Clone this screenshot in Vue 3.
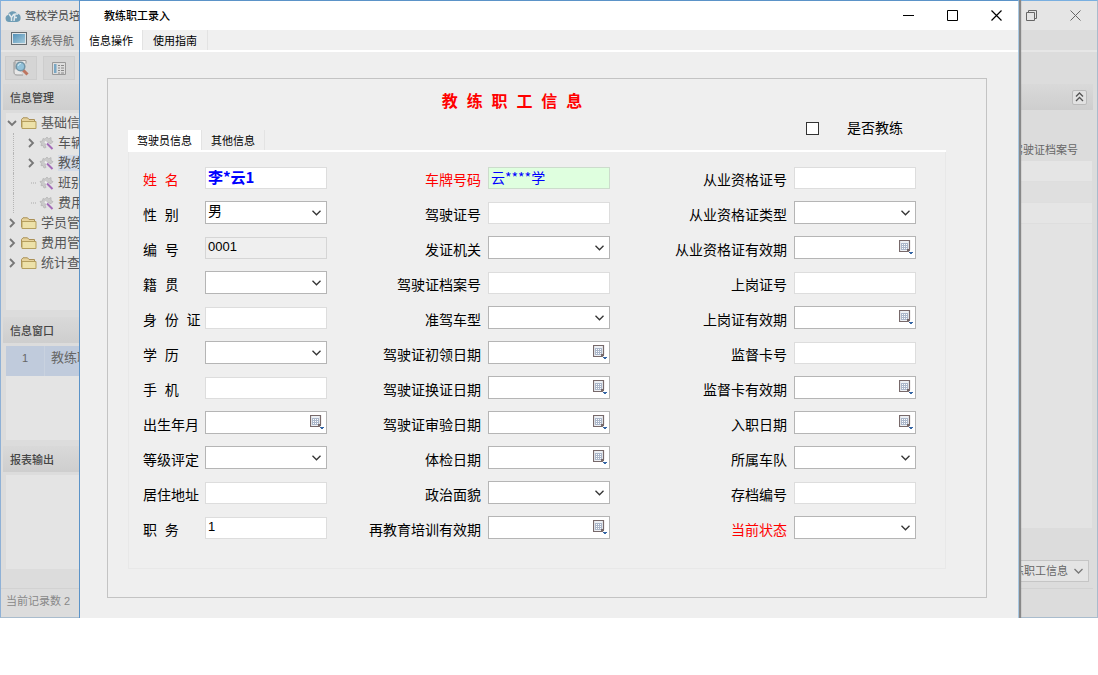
<script setup>
import { ref } from 'vue'

const heading = '教  练  职  工  信  息'

const tree = [
  { text: '基础信', level: 1, open: true },
  { text: '车辆', level: 2, arrow: true },
  { text: '教练', level: 2, arrow: true, active: true },
  { text: '班别', level: 2 },
  { text: '费用', level: 2, last: true },
  { text: '学员管', level: 1 },
  { text: '费用管', level: 1 },
  { text: '统计查', level: 1 },
]

const columns = [
  [
    { label: '姓  名', type: 'text', value: '李*云1', required: true, look: 'strong' },
    { label: '性  别', type: 'select', value: '男' },
    { label: '编  号', type: 'text', value: '0001', look: 'locked' },
    { label: '籍  贯', type: 'select', value: '' },
    { label: '身  份  证', type: 'text', value: '' },
    { label: '学  历', type: 'select', value: '' },
    { label: '手  机', type: 'text', value: '' },
    { label: '出生年月', type: 'date', value: '' },
    { label: '等级评定', type: 'select', value: '' },
    { label: '居住地址', type: 'text', value: '' },
    { label: '职  务', type: 'text', value: '1' },
  ],
  [
    { label: '车牌号码', type: 'text', value: '云****学', required: true, look: 'plate' },
    { label: '驾驶证号', type: 'text', value: '' },
    { label: '发证机关', type: 'select', value: '' },
    { label: '驾驶证档案号', type: 'text', value: '' },
    { label: '准驾车型', type: 'select', value: '' },
    { label: '驾驶证初领日期', type: 'date', value: '' },
    { label: '驾驶证换证日期', type: 'date', value: '' },
    { label: '驾驶证审验日期', type: 'date', value: '' },
    { label: '体检日期', type: 'date', value: '' },
    { label: '政治面貌', type: 'select', value: '' },
    { label: '再教育培训有效期', type: 'date', value: '' },
  ],
  [
    { label: '从业资格证号', type: 'text', value: '' },
    { label: '从业资格证类型', type: 'select', value: '' },
    { label: '从业资格证有效期', type: 'date', value: '' },
    { label: '上岗证号', type: 'text', value: '' },
    { label: '上岗证有效期', type: 'date', value: '' },
    { label: '监督卡号', type: 'text', value: '' },
    { label: '监督卡有效期', type: 'date', value: '' },
    { label: '入职日期', type: 'date', value: '' },
    { label: '所属车队', type: 'select', value: '' },
    { label: '存档编号', type: 'text', value: '' },
    { label: '当前状态', type: 'select', value: '', required: true },
  ],
]
const fields = ref(columns)
const isCoach = ref(false)
</script>

<template>
  <div class="screen">
    <div class="main">
      <header class="main-title">
        <svg class="logo" width="16" height="14" viewBox="0 0 16 14">
          <path d="M4 13a3.6 3.6 0 0 1-1-7A5 5 0 0 1 12 4.500a4.300 4.300 0 0 1 0 8.500z" fill="#6f9db5" />
          <path d="M4 5l2.500 3.500L9 5M6.500 8.500V12M13 5h-3l-1 7M9.500 8.500H12" fill="none" stroke="#dfe8ec" stroke-width="1.500" />
        </svg>
        <span class="app-name">驾校学员培</span>
        <button class="win-btn" aria-label="还原">
          <svg width="11" height="11" viewBox="0 0 11 11" fill="none" stroke="currentColor"><path d="M.5 2.500h8v8h-8zM2.500 2.500v-2h8v8h-2" /></svg>
        </button>
        <button class="win-btn" aria-label="关闭">
          <svg width="11" height="11" viewBox="0 0 11 11" fill="none" stroke="currentColor"><path d="M.5.5l10 10M10.500.5l-10 10" /></svg>
        </button>
      </header>
      <nav class="main-nav">
        <svg width="16" height="14" viewBox="0 0 16 14">
          <defs><linearGradient id="scr" x1="0" y1="0" x2="1" y2="1"><stop offset="0" stop-color="#5391b8" /><stop offset="1" stop-color="#a5cbdc" /></linearGradient></defs>
          <rect x=".5" y=".5" width="15" height="12" fill="#dfe5e8" stroke="#666c70" />
          <rect x="2" y="2" width="12" height="9" fill="url(#scr)" />
        </svg>
        <span>系统导航</span>
      </nav>
      <div class="work">
        <aside class="side">
          <div class="tools">
            <button class="tool" aria-label="查询">
              <svg width="18" height="18" viewBox="0 0 18 18">
                <path d="M3 1.500h11v3M3 1.500v9M2 3v10c0 2 1 3 3 3h6" fill="#e8e8e8" stroke="#999" />
                <path d="M11 11l4.500 4.500" stroke="#bd7560" stroke-width="3" />
                <circle cx="8.500" cy="7.500" r="4.300" fill="#92c2da" stroke="#7294a5" stroke-width="1.500" />
                <path d="M6 7a3 3 0 0 1 3-2.500" fill="none" stroke="#d7edf5" />
              </svg>
            </button>
            <button class="tool" aria-label="列表">
              <svg width="14" height="13" viewBox="0 0 14 13">
                <path d="M.5.5h13v12H.5z" fill="#ddd" stroke="#999" />
                <path d="M2 2h2.500v9H2z" fill="#79a7c4" />
                <path d="M6 3.500h2M9 3.500h3M6 6h2M9 6h3M6 8.500h2M9 8.500h3M6 11h2M9 11h3" stroke="#888" />
              </svg>
            </button>
          </div>
          <h2 class="bar">信息管理</h2>
          <ul class="tree">
            <li v-for="n in tree" :key="n.text" :class="['node', 'l' + n.level, { last: n.last }]">
              <svg class="arrow" width="10" height="10" viewBox="0 0 10 10" fill="none" stroke="#777" stroke-width="1.800">
                <path v-if="n.open" d="M1 3l4 4 4-4" />
                <path v-else-if="n.level === 1 || n.arrow" d="M3 1l4 4-4 4" />
                <path v-else d="M5 5h5" stroke="#aaa" stroke-width="1" stroke-dasharray="1 1" />
              </svg>
              <svg v-if="n.level === 1" width="16" height="13" viewBox="0 0 16 13">
                <path d="M.5 10V2.500L2 .8h4.500L8 2.500h5.500V10z" fill="#e6d29c" stroke="#a98f55" />
                <path d="M1 11.500V4.500h14v7z" fill="#ede1a9" stroke="#b59f5f" />
              </svg>
              <svg v-else width="16" height="14" viewBox="0 0 16 14">
                <path d="M1 5.500L3.500 5 4 2.500l2 .7 2-2.200 1.500 2L12 1.500v3l2 1.200-2 2L8 6l-2 3 1 2.500-2 .5-1-2.500-2 .2.500-2z" fill="#cacaca" stroke="#b5b5b5" stroke-width=".8" />
                <path d="M6 5.500l3 3" stroke="#eee" stroke-width="2" />
                <path d="M8 7.500l5.500 5.500" stroke="#a36bb8" stroke-width="2" />
              </svg>
              <span :class="['name', { active: n.active }]">{{ n.text }}</span>
            </li>
          </ul>
          <h2 class="bar">信息窗口</h2>
          <div class="list windows">
            <div class="win-row"><span class="num">1</span><span class="win-name">教练职</span></div>
          </div>
          <h2 class="bar">报表输出</h2>
          <div class="list reports"></div>
        </aside>
        <section class="content">
          <div class="content-bar">
            <button class="collapse" aria-label="折叠">
              <svg width="9" height="10" viewBox="0 0 9 10" fill="none" stroke="#555" stroke-width="1.300"><path d="M1 4.500L4.500 1 8 4.500M1 9l3.500-3.500L8 9" /></svg>
            </button>
          </div>
          <div class="grid-head">驾驶证档案号</div>
          <div class="grid-rows">
            <div class="grid-row"></div>
            <div class="grid-row dim"></div>
            <div class="grid-row"></div>
          </div>
          <div class="picker">
            <button class="drop">
              <span>教练职工信息</span>
              <svg width="9" height="6" viewBox="0 0 9 6" fill="none" stroke="#777" stroke-width="1.300"><path d="M.5 1l4 4 4-4" /></svg>
            </button>
          </div>
        </section>
      </div>
      <footer class="status">当前记录数 2</footer>
    </div>

    <div class="dialog" role="dialog" aria-labelledby="dlg-title">
      <header class="dlg-title">
        <h1 id="dlg-title">教练职工录入</h1>
        <button class="win-btn" aria-label="最小化">
          <svg width="11" height="11" viewBox="0 0 11 11" stroke="currentColor"><path d="M0 5.500h11" /></svg>
        </button>
        <button class="win-btn" aria-label="最大化">
          <svg width="11" height="11" viewBox="0 0 11 11" fill="none" stroke="currentColor"><path d="M.5.5h10v10H.5z" /></svg>
        </button>
        <button class="win-btn" aria-label="关闭">
          <svg width="11" height="11" viewBox="0 0 11 11" fill="none" stroke="currentColor" stroke-width="1.200"><path d="M.5.5l10 10M10.500.5l-10 10" /></svg>
        </button>
      </header>
      <div class="tabs">
        <button class="tab on">信息操作</button>
        <button class="tab wide">使用指南</button>
      </div>
      <form class="box" @submit.prevent>
        <h2 class="heading">{{ heading }}</h2>
        <div class="strip">
          <div class="inner-tabs">
            <button type="button" class="tab on">驾驶员信息</button>
            <button type="button" class="tab">其他信息</button>
          </div>
          <div class="coach">
            <input id="coach" v-model="isCoach" type="checkbox" />
            <label for="coach">是否教练</label>
          </div>
        </div>
        <div class="panel">
          <div v-for="(col, c) in fields" :key="c" :class="['col', { first: c === 0 }]">
            <div v-for="(f, r) in col" :key="f.label" class="row">
              <label :for="`f${c}-${r}`" :class="{ required: f.required }">{{ f.label }}</label>
              <input v-if="f.type === 'text'" :id="`f${c}-${r}`" v-model="f.value" type="text" :class="['ctl', f.look]" :readonly="f.look === 'locked'" />
              <div v-else-if="f.type === 'select'" class="ctl combo">
                <select :id="`f${c}-${r}`" v-model="f.value">
                  <option value=""></option>
                  <option v-if="f.value" :value="f.value">{{ f.value }}</option>
                </select>
                <svg class="chev" width="9" height="6" viewBox="0 0 9 6" fill="none" stroke="#333" stroke-width="1.300"><path d="M.5.8l4 4 4-4" /></svg>
              </div>
              <div v-else class="ctl combo">
                <input :id="`f${c}-${r}`" v-model="f.value" type="text" />
                <button type="button" class="cal" aria-label="选择日期">
                  <svg width="15" height="15" viewBox="0 0 15 15">
                    <path d="M.5.5h10v9l-2 2h-8z" fill="#edf0f4" stroke="#77696a" stroke-width="1.200" />
                    <path d="M2 3h7v7H2z" fill="#abb7ca" />
                    <path d="M3 4.500h1M5 4.500h1M7 4.500h1M3 6.500h1M5 6.500h1M7 6.500h1M3 8.500h1M5 8.500h1M7 8.500h1" stroke="#fff" />
                    <path d="M8 9h3v1.500L9.500 12H8z" fill="#77696a" />
                    <path d="M10 12h4v1h-1v1h-2v-1h-1z" fill="#3566a5" />
                  </svg>
                </button>
              </div>
            </div>
          </div>
        </div>
      </form>
    </div>
  </div>
</template>

<style>
body {
  margin: 0;
  background: #fff;
}
</style>

<style scoped>
* {
  box-sizing: border-box;
}
.screen {
  display: grid;
  grid-template-columns: minmax(0, 1fr);
  font-family: "Liberation Sans", "Noto Sans CJK SC", sans-serif;
  font-size: 11px;
  line-height: 16px;
  color: #000;
}
.main,
.dialog {
  grid-area: 1 / 1;
}
h1,
h2,
ul {
  margin: 0;
  padding: 0;
  font-weight: normal;
  font-size: 11px;
}
button {
  font: inherit;
  color: inherit;
  padding: 0;
  border: 0;
  background: none;
}
svg {
  flex: none;
  display: block;
}
.win-btn {
  width: 44px;
  height: 29px;
  display: flex;
  align-items: center;
  justify-content: center;
}

/* Background window */
.main {
  display: flex;
  flex-direction: column;
  background: #dcdcdc;
  color: #666;
  border: 1px solid #a9bccd;
  border-top-color: #79afe0;
  border-left: 1px solid #8fb1d6;
}
.main-title {
  display: flex;
  align-items: center;
  height: 29px;
  background: #e5e5e5;
  padding-left: 4px;
}
.app-name {
  color: #444;
  margin: 0 auto 0 4px;
}
.main-nav {
  display: flex;
  align-items: center;
  height: 22px;
  padding: 2px 0 0 10px;
  gap: 3px;
  border-bottom: 2px solid #e6e6e6;
}
.main-nav svg {
  margin-bottom: 4px;
}
.work {
  flex: 1;
  display: flex;
}
.side {
  width: 200px;
  padding-left: 2px;
}
.tools {
  display: flex;
  gap: 6px;
  padding: 4px 2px;
  height: 32px;
}
.tool {
  width: 32px;
  height: 24px;
  display: flex;
  align-items: center;
  justify-content: center;
  background: #d5d5d5;
  border: 1px solid #cdcdcd;
}
.bar {
  height: 26px;
  line-height: 28px;
  padding-left: 7px;
  color: #444;
  font-weight: 500;
  background: linear-gradient(#d9d9d9, #cecece);
}
.tree {
  list-style: none;
  margin: 3px 0 7px 3px;
  height: 197px;
  background: #e4e4e4;
}
.node {
  display: flex;
  align-items: center;
  height: 20px;
  font-size: 13px;
  color: #555;
  gap: 4px;
}
.node.l1 {
  padding-left: 1px;
}
.node.l2 {
  margin-left: 7px;
  padding-left: 12px;
  border-left: 1px dotted #b5b5b5;
  gap: 3px;
}
.node .name {
  flex: 1;
}
.name.active {
  background: #d3dae6;
}
.list {
  margin: 3px 0 6px 3px;
  background: #e4e4e4;
}
.windows {
  height: 94px;
}
.reports {
  height: 94px;
}
.win-row {
  display: flex;
  align-items: center;
  height: 30px;
  background: #c0cbdc;
  font-size: 13px;
}
.num {
  width: 39px;
  height: 30px;
  line-height: 24px;
  text-align: center;
  font-size: 11px;
  border-right: 1px solid #c9d2df;
}
.win-name {
  height: 30px;
  line-height: 24px;
  padding-left: 6px;
}
.content {
  flex: 1;
  display: flex;
  flex-direction: column;
  padding: 32px 4px 0 0;
}
.content-bar {
  height: 26px;
  background: linear-gradient(#d9d9d9, #cecece);
  display: flex;
  align-items: center;
  justify-content: flex-end;
  padding-right: 6px;
}
.collapse {
  width: 15px;
  height: 15px;
  display: flex;
  align-items: center;
  justify-content: center;
  background: #e2e2e2;
  border: 1px solid #bbb;
  border-radius: 2px;
}
.grid-head {
  padding: 32px 15px 3px 0;
  text-align: right;
}
.grid-rows {
  flex: 1;
  margin-right: 1px;
  background: #e3e3e3;
}
.grid-row {
  height: 21px;
  background: #e5e5e5;
  border-bottom: 1px solid #dedede;
}
.grid-row.dim {
  background: #dfdfdf;
}
.picker {
  display: flex;
  justify-content: flex-end;
  padding: 32px 4px 6px 0;
}
.drop {
  display: flex;
  align-items: center;
  gap: 6px;
  height: 22px;
  padding: 0 5px 0 60px;
  background: #e4e4e4;
  border: 1px solid #c5c5c5;
}
.status {
  height: 29px;
  margin-right: 4px;
  padding: 4px 5px 0;
  border-top: 1px solid #d2d2d2;
  color: #888;
}

/* Entry dialog */
.dialog {
  margin: 0 79px;
  padding-bottom: 20px;
  background: #efefef;
  border: solid #5b93c8;
  border-width: 1px 1px 0;
  border-right-color: #a9c8e2;
  box-shadow: 2px 0 1px #888;
  clip-path: inset(0 -4px 0 0);
}
.dlg-title {
  display: flex;
  align-items: center;
  height: 29px;
  background: #fff;
}
.dlg-title h1 {
  margin: 0 auto 0 24px;
  font-weight: 500;
}
.tabs {
  display: flex;
  height: 22px;
  background: #f0f0f0;
  border-bottom: 2px solid #fff;
}
.tab {
  height: 20px;
  padding: 2px 9px 0;
  border-right: 1px solid #e3e3e3;
}
.tab.on {
  background: #fff;
}
.tab.wide {
  padding: 2px 10px 0;
}
.box {
  margin: 26px 31px 0 27px;
  padding: 0 40px 28px 20px;
  border: 1px solid #c3c3c3;
}
.heading {
  margin-top: 11px;
  margin-right: 50px;
  text-align: center;
  white-space: pre;
  font-size: 16px;
  font-weight: bold;
  line-height: 24px;
  color: #f00;
}
.strip {
  display: flex;
  justify-content: space-between;
  height: 38px;
  border-bottom: 2px solid #fff;
}
.inner-tabs {
  display: flex;
  align-items: flex-end;
}
.coach {
  display: flex;
  align-items: center;
  gap: 28px;
  height: 28px;
  padding-right: 43px;
  font-size: 14px;
}
.coach input {
  appearance: none;
  width: 13px;
  height: 13px;
  margin: 0;
  background: #fff;
  border: 1px solid #333;
}
.coach input:checked {
  background: #333;
}
.panel {
  display: grid;
  grid-template-columns: 184fr 283fr 306fr;
  padding: 14px 29px 29px 14px;
  border: 1px solid #e8e8e8;
  border-top: 0;
}
.col {
  display: flex;
  flex-direction: column;
  gap: 12px;
}
.row {
  display: flex;
  align-items: center;
  height: 23px;
  font-size: 14px;
}
.row label {
  flex: 1;
  padding: 4px 7px 0 0;
  text-align: right;
  white-space: pre;
}
.first label {
  text-align: left;
  padding-right: 0;
}
.row .required {
  color: #f00;
}
.ctl {
  width: 122px;
  height: 22px;
  margin: 0;
  padding: 0 2px 2px;
  border: 1px solid #ddd;
  background: #fff;
  font: 13px/18px "Liberation Sans", "Noto Sans CJK SC", sans-serif;
}
.ctl.locked {
  background: #efefef;
  border-color: #d5d5d5;
}
.ctl.strong {
  font: bold 15px/18px "Noto Sans CJK SC", sans-serif;
  color: #00f;
}
.ctl.plate {
  font: 14px/18px "Noto Sans CJK SC", sans-serif;
  color: #00f;
  background: #dfffdf;
  border-color: #ccdccc;
}
.combo {
  display: grid;
  grid-template-columns: 1fr 19px;
  height: 23px;
  padding: 0;
  border-color: #b5b5b5;
}
.combo select,
.combo input {
  grid-area: 1 / 1 / 2 / 3;
  appearance: none;
  width: 100%;
  min-width: 0;
  height: 21px;
  margin: 0;
  padding: 0 20px 2px 2px;
  border: 0;
  background: none;
  color: #000;
  font: 14px/19px "Liberation Sans", "Noto Sans CJK SC", sans-serif;
}
.chev {
  grid-area: 1 / 2;
  align-self: center;
  justify-self: center;
  pointer-events: none;
}
.cal {
  grid-area: 1 / 2;
  display: flex;
  padding: 3px 0 0 3px;
  height: 21px;
}
</style>
